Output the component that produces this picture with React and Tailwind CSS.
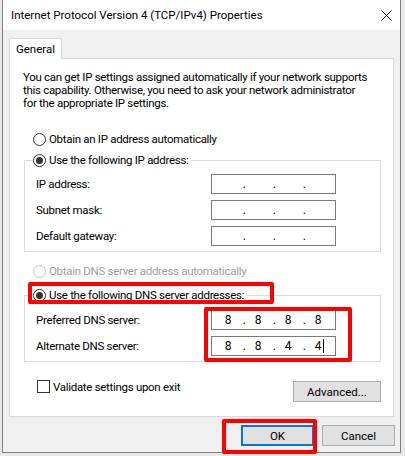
import React from 'react';

function Radio({ checked = false, disabled = false, label }) {
  return (
    <span className={`flex items-center h-[16px] ${disabled ? 'text-[#a0a0a0]' : 'text-black'}`}>
      <span
        className={`w-[13px] h-[13px] rounded-full border bg-white flex items-center justify-center ${
          disabled ? 'border-[#c4c4c4]' : 'border-[#333333]'
        }`}
      >
        {checked && <span className="w-[7px] h-[7px] rounded-full bg-[#333333]" />}
      </span>
      <span className="ml-[3px] whitespace-nowrap">{label}</span>
    </span>
  );
}

function IpBox({ parts = ['', '', '', ''], caret = false }) {
  return (
    <div className="w-[125px] h-[20px] border border-[#7a7a7a] bg-white flex items-center pl-[5px] text-black text-[12px] tracking-normal">
      {parts.map((p, i) => (
        <React.Fragment key={i}>
          <span className="w-[22px] text-center relative">
            {p}
            {caret && i === 3 && (
              <span className="absolute top-[1px] right-[5px] w-px h-[14px] bg-black" />
            )}
          </span>
          {i < 3 && <span className="w-[8px] text-right pr-[1px]">.</span>}
        </React.Fragment>
      ))}
    </div>
  );
}

function Row({ label, parts, caret }) {
  return (
    <div className="flex items-center h-[20px]">
      <span className="w-[175px] whitespace-nowrap">{label}</span>
      <IpBox parts={parts} caret={caret} />
    </div>
  );
}

function Button({ children, focused = false, className = '' }) {
  return (
    <div
      className={`flex items-center justify-center bg-[#e1e1e1] text-black ${
        focused ? 'border-2 border-[#0078d7]' : 'border border-[#adadad]'
      } ${className}`}
    >
      {children}
    </div>
  );
}

export default function App() {
  return (
    <div className="relative w-[405px] h-[456px] bg-[#e9e9e9] overflow-hidden font-['Roboto',sans-serif] text-[11.5px] leading-[16px] text-black">
      <div className="ml-[2px] w-[399px] h-[453px] border-l border-r border-b border-[#7f7f7f] bg-[#f0f0f0] flex flex-col">
        {/* title bar */}
        <div className="h-[30px] bg-white flex items-center justify-between pl-[8px] pr-[8px]">
          <span className="whitespace-nowrap text-black">Internet Protocol Version 4 (TCP/IPv4) Properties</span>
          <svg width="11" height="11" viewBox="0 0 11 11" className="mt-[1px]">
            <path d="M0.5 0.5 L10.5 10.5 M10.5 0.5 L0.5 10.5" stroke="#111" strokeWidth="1" fill="none" />
          </svg>
        </div>

        {/* tabs */}
        <div className="pl-[6px] pt-[8px] tracking-[-0.3px]">
          <div className="relative z-10 -mb-px w-[53px] h-[21px] bg-white border border-b-0 border-[#d9d9d9] flex items-center justify-center tracking-normal">
            General
          </div>
          <div className="w-[385px] h-[359px] bg-white border border-[#d9d9d9] flex flex-col">
            <p className="mt-[12px] pl-[13px] leading-[13px] whitespace-nowrap">
              You can get IP settings assigned automatically if your network supports
              <br />
              this capability. Otherwise, you need to ask your network administrator
              <br />
              for the appropriate IP settings.
            </p>

            <div className="mt-[21px] pl-[23px]">
              <Radio label="Obtain an IP address automatically" />
            </div>

            <fieldset className="mt-[5px] ml-[14px] w-[357px] border border-[#dcdcdc] px-[8px] pb-[5px]">
              <legend className="pr-[2px]">
                <Radio checked label="Use the following IP address:" />
              </legend>
              <div className="pl-[3px] pt-[6px] flex flex-col gap-[6px]">
                <Row label="IP address:" />
                <Row label="Subnet mask:" />
                <Row label="Default gateway:" />
              </div>
            </fieldset>

            <div className="mt-[11px] pl-[23px]">
              <Radio disabled label="Obtain DNS server address automatically" />
            </div>

            <fieldset className="mt-[8px] ml-[14px] w-[357px] border border-[#dcdcdc] px-[8px] pb-[5px]">
              <legend className="pr-[2px]">
                <Radio checked label="Use the following DNS server addresses:" />
              </legend>
              <div className="pl-[3px] pt-[7px] flex flex-col gap-[6px]">
                <Row label="Preferred DNS server:" parts={['8', '8', '8', '8']} />
                <Row label="Alternate DNS server:" parts={['8', '8', '4', '4']} caret />
              </div>
            </fieldset>

            <div className="flex justify-between pl-[27px] pr-[12px]">
              <label className="mt-[18px] flex items-center h-[13px]">
                <span className="w-[13px] h-[13px] border border-[#333333] bg-white" />
                <span className="ml-[3px] whitespace-nowrap">Validate settings upon exit</span>
              </label>
              <Button className="mt-[19px] w-[88px] h-[21px] tracking-normal">Advanced...</Button>
            </div>
          </div>
        </div>

        {/* dialog buttons */}
        <div className="flex justify-end gap-[8px] pr-[5px] mt-[8px]">
          <Button focused className="w-[73px] h-[21px]">OK</Button>
          <Button className="w-[73px] h-[21px]">Cancel</Button>
        </div>
      </div>

      {/* red annotation boxes */}
      <div className="absolute left-[28px] top-[282px] w-[246px] h-[22px] border-4 border-[#ff0000] rounded-[2px]" />
      <div className="absolute left-[204px] top-[307px] w-[148px] h-[55px] border-4 border-[#ff0000] rounded-[2px]" />
      <div className="absolute left-[222px] top-[419px] w-[95px] h-[35px] border-4 border-[#ff0000] rounded-[2px]" />
    </div>
  );
}
